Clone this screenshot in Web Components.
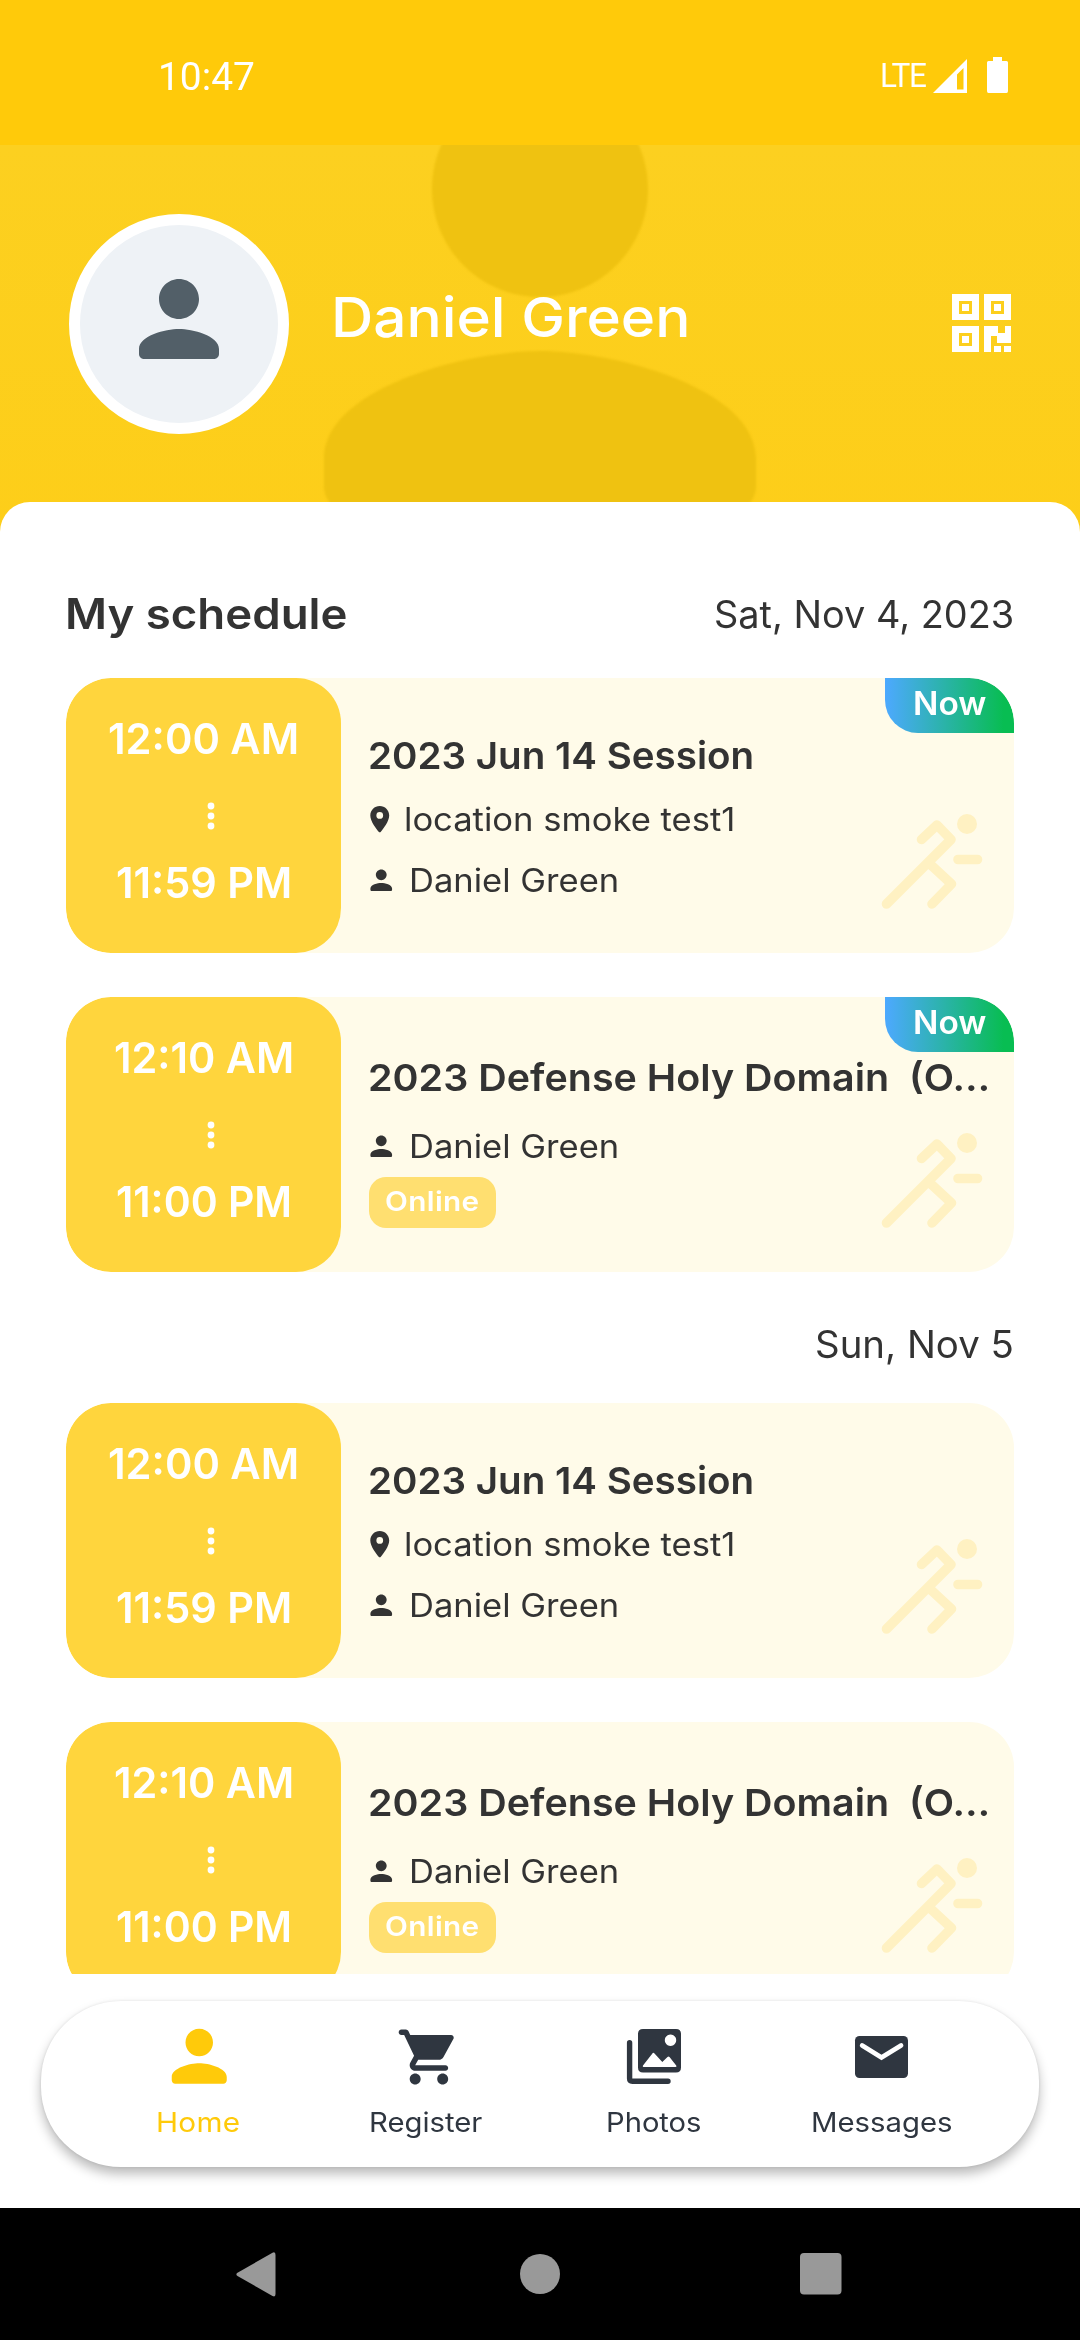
<!DOCTYPE html>
<html lang="en">
<head>
<meta charset="utf-8">
<title>My schedule</title>
<style>
html,body{margin:0;padding:0;background:#fff}
body{width:1080px;height:2340px;overflow:hidden;font-family:Inter,"Open Sans",sans-serif;color:#333}
</style>
</head>
<body>
<schedule-app></schedule-app>
<script>
const define = (name, html, setup) => {
  const t = document.createElement('template');
  t.innerHTML = html;
  customElements.define(name, class extends HTMLElement {
    connectedCallback() {
      if (this.shadowRoot) return;
      this.attachShadow({mode: 'open'}).append(t.content.cloneNode(true));
      if (setup) setup(this, this.shadowRoot);
    }
  });
};

// A single line whose glyphs are widened (and lightly tracked) so that its ink spans exactly `w` pixels.
const ctx = document.createElement('canvas').getContext('2d');
define('fit-text', `<style>
:host{display:block;flex:none;white-space:pre;line-height:var(--lh,50px);height:var(--lh,50px)}
span{display:inline-block;white-space:pre;transform-origin:0 50%}
</style><span><slot></slot></span>`, (host, root) => {
  const g = n => host.getAttribute(n);
  const size = +g('size'), weight = g('weight') || 400, w = +g('w');
  const family = g('family') || 'Inter';
  const text = host.textContent;
  ctx.font = `${weight} ${size}px ${family}`;
  const m = ctx.measureText(text);
  const ink = m.actualBoundingBoxRight + m.actualBoundingBoxLeft;
  const sx = Math.max(.94, Math.min(1.1, w / ink));
  const ls = (w / sx - ink) / (text.length - 1);
  host.style.cssText += `;width:${w}px;font:${weight} ${size}px/var(--lh,50px) ${family},sans-serif;letter-spacing:${ls.toFixed(3)}px`;
  const span = root.querySelector('span');
  span.style.transform = `scaleX(${sx.toFixed(4)})`;
  span.style.marginLeft = (m.actualBoundingBoxLeft * sx).toFixed(2) + 'px';
});

const ICONS = {
  person: '<svg viewBox="0 0 24 24"><path d="M12 12c2.21 0 4-1.79 4-4s-1.79-4-4-4-4 1.79-4 4 1.79 4 4 4zm0 2c-2.67 0-8 1.34-8 4v1c0 .55.45 1 1 1h14c.55 0 1-.45 1-1v-1c0-2.66-5.33-4-8-4z"/></svg>',
  pin: '<svg viewBox="5 2 14 20"><path fill-rule="evenodd" d="M12 2C8.1 2 5 5.1 5 9c0 4.2 4.4 9.9 6.2 12.1.4.5 1.2.5 1.6 0C14.600 18.900 19 13.200 19 9c0-3.900-3.100-7-7-7zm0 9.500a2.500 2.500 0 1 1 0-5 2.500 2.500 0 0 1 0 5z"/></svg>',
  cart: '<svg viewBox="-.7 0 24 24"><path d="M7 18c-1.1 0-1.990.9-1.990 2S5.900 22 7 22s2-.9 2-2-.9-2-2-2zM1 3c0 .55.45 1 1 1h1l3.600 7.590-1.350 2.440C4.520 15.370 5.480 17 7 17h11c.55 0 1-.45 1-1s-.45-1-1-1H7l1.100-2h7.450c.75 0 1.410-.41 1.750-1.030l3.580-6.490A.996.996 0 0 0 20.010 4H5.210l-.67-1.430A.993.993 0 0 0 3.640 2H2c-.55 0-1 .45-1 1zm16 15c-1.100 0-1.990.9-1.990 2s.89 2 1.990 2 2-.9 2-2-.9-2-2-2z"/></svg>',
  photos: '<svg viewBox="0 0 54 55"><path fill-rule="evenodd" d="M16 0H49Q54 0 54 5V38.500Q54 43.500 49 43.500H16Q11 43.500 11 38.500V5Q11 0 16 0zM43.500 5.500a5.700 5.700 0 1 0 .01 0zM16.500 38H48.500Q50 38 49.200 36.500L42.500 28Q41.500 26.800 40.500 28L35.300 33 27.500 24.500Q26.300 23 25.200 24.700L16 36.500Q15.400 38 16.500 38z"/><path d="M2.600 13.800V49.500Q2.600 52.200 5.300 52.200H41" fill="none" stroke="currentColor" stroke-width="5.400" stroke-linecap="round"/></svg>',
  mail: '<svg viewBox="0 0 53 42"><rect width="53" height="42" rx="4.500"/><path d="M7.200 9.500L26.500 21.500 46 9.500" fill="none" stroke="#fff" stroke-width="4.800" stroke-linecap="round"/></svg>',
  qr: '<svg viewBox="0 0 59 58"><path fill-rule="evenodd" d="M0 0h27v26H0zM7 7v13h13V7zM10 10h7v7h-7zM32 0h27v26H32zM39 7v13h13V7zM42 10h7v7h-7zM0 32h27v26H0zM7 39v13h13V39zM10 42h7v7h-7zM32 32h14v7h7v-7h6v17H45v-7h-6v16h-7zM42 52h7v6h-7zM52 52h7v6h-7z"/></svg>',
  runner: '<svg viewBox="0 0 102 95"><g fill="none" stroke="currentColor" stroke-width="9.600" stroke-linecap="round" stroke-linejoin="round"><path d="M40.500 25.500L56 11 70 25.500 5.500 90M50 51L70.500 70 51 90M77 45.500H96.500"/></g><circle cx="86" cy="10" r="10"/></svg>',
  dots: '<svg viewBox="0 0 8 28"><circle cx="4" cy="4" r="3.400"/><circle cx="4" cy="14" r="3.400"/><circle cx="4" cy="24" r="3.400"/></svg>',
  signal: '<svg viewBox="0 0 34 34"><path fill-rule="evenodd" d="M34 0V34H0zM30.500 9L24 15.500V30.500H30.500z"/></svg>',
  battery: '<svg viewBox="0 0 21 36"><path d="M6 0h9v4h4.500Q21 4 21 5.500v28.500Q21 36 19.500 36h-18Q0 36 0 34V5.500Q0 4 1.500 4H6z"/></svg>',
  back: '<svg viewBox="0 0 40 45"><path d="M36.500 .8Q39.500-.8 39.500 3V42Q39.500 45.600 36.500 44L1.500 24Q-.8 22.400 1.500 20.800z"/></svg>',
  home: '<svg viewBox="0 0 40 40"><circle cx="20" cy="20" r="20"/></svg>',
  recent: '<svg viewBox="0 0 41.500 41.500"><rect width="41.500" height="41.500" rx="4"/></svg>'
};
define('app-icon', `<style>:host{display:block;flex:none}svg{display:block;width:100%;height:100%;fill:currentColor;overflow:visible}</style>`,
  (host, root) => {
    root.innerHTML += ICONS[host.getAttribute('name')];
    const [w, h] = host.getAttribute('box').split(' ');
    host.style.width = w + 'px'; host.style.height = h + 'px';
  });

define('status-bar', `<style>
:host{display:flex;box-sizing:border-box;height:145px;flex:none;background:#ffca0a;color:#fff;padding:52px 72px 0 161px;align-items:flex-start}
.sp{flex:1}
.lte{margin-top:-1px;margin-right:7px}
.sig{margin:7px 20px 0 0}.bat{margin-top:5px}
</style>
<fit-text size="39" w="93" family="Roboto">10:47</fit-text><div class="sp"></div>
<fit-text class="lte" size="33.500" w="44" family="Roboto">LTE</fit-text>
<app-icon class="sig" name="signal" box="34 34"></app-icon><app-icon class="bat" name="battery" box="21 36"></app-icon>`);

define('profile-header', `<style>
:host{display:flex;position:relative;box-sizing:border-box;height:387px;flex:none;overflow:hidden;background:linear-gradient(#fcd020,#fdce19);padding:69px 69px 0;color:#fff}
.ghost{position:absolute;left:216px;top:-172px;color:#efc211;filter:blur(.8px)}
.avatar{position:relative;box-sizing:border-box;width:220px;height:220px;border:11px solid #fff;border-radius:50%;background:#eef2f6;color:#525f68;padding:34px 39px}
.name{position:relative;margin:78px 0 0 46px}
.sp{flex:1}.qr{margin-top:80px}
</style>
<app-icon class="ghost" name="person" box="648 648"></app-icon>
<div class="avatar"><app-icon name="person" box="120 120"></app-icon></div>
<fit-text class="name" size="54.500" w="351" weight="500">Daniel Green</fit-text><div class="sp"></div>
<app-icon class="qr" name="qr" box="59 58"></app-icon>`);

define('session-card', `<style>
:host{display:flex;position:relative;height:275px;flex:none;background:#fffbe9;border-radius:45px;overflow:hidden}
.time{box-sizing:border-box;width:275px;height:275px;border-radius:45px;background:#ffd53d;color:#fff;display:flex;flex-direction:column;align-items:center;padding:36px 1px 0 0}
.dots{margin:38px 0 28px 15px}
.info{padding:53px 0 0 29px;display:flex;flex-direction:column;align-items:flex-start}
:host([online]) .info{padding-top:56px}
.row{display:flex;align-items:center;height:40px;--lh:40px}
.place{margin-top:18.500px;gap:17px}
.host{margin-top:21px;gap:18px}
.host app-icon{margin:-1px -4px 0 -5px}
:host([online]) .host{margin-top:24px}
.pill{display:flex;margin:10px 0 0 -1px;padding:0 17.500px;background:#ffdf70;color:#fff;border-radius:17px;height:51px;--lh:49px}
.now{position:absolute;right:0;top:0;box-sizing:border-box;width:129px;height:55px;border-radius:0 45px 0 33px;background:linear-gradient(90deg,#4da9ff,#08bd52 92%);color:#fff;padding-left:30px;--lh:52px}
.run{position:absolute;right:31px;top:136px;color:#fff1c2}
</style>
<div class="time"></div>
<div class="info"></div><app-icon class="run" name="runner" box="102 95"></app-icon>`, (host, root) => {
  const on = host.hasAttribute('online');
  const t = (text, w) => `<fit-text size="42.500" weight="600" w="${w}">${text}</fit-text>`;
  const dots = '<app-icon class="dots" name="dots" box="8 28"></app-icon>';
  root.querySelector('.time').innerHTML = on
    ? t('12:10 AM', 177) + dots + t('11:00 PM', 173)
    : t('12:00 AM', 188) + dots + t('11:59 PM', 173);
  const person = '<div class="row host"><app-icon name="person" box="32.500 32.500"></app-icon><fit-text size="32" w="206">Daniel Green</fit-text></div>';
  root.querySelector('.info').innerHTML = on
    ? '<fit-text size="37.500" weight="600" w="617">2023 Defense Holy Domain  (O…</fit-text>' + person + '<div class="pill"><fit-text size="27" weight="600" w="92">Online</fit-text></div>'
    : '<fit-text size="37.500" weight="600" w="382">2023 Jun 14 Session</fit-text><div class="row place"><app-icon name="pin" box="19.500 27"></app-icon><fit-text size="32" w="327">location smoke test1</fit-text></div>' + person;
  if (host.hasAttribute('now')) {
    const now = document.createElement('div');
    now.className = 'now';
    now.innerHTML = '<fit-text size="32.500" weight="600" w="71">Now</fit-text>';
    root.append(now);
  }
});

define('schedule-list', `<style>
:host{display:flex;flex-direction:column;box-sizing:border-box;height:1472px;flex:none;overflow:hidden;background:#fff;padding:0 66px;border-radius:30px 30px 0 0}
.head{display:flex;justify-content:space-between;padding:87px 2px 0;height:89px;flex:none}
.head fit-text:last-child{margin-top:1px}
.day{display:flex;justify-content:flex-end;padding:48px 1.500px 0;height:83px;flex:none}
.gap{height:44px;flex:none}
</style>
<div class="head"><fit-text size="42.500" weight="600" w="278">My schedule</fit-text><fit-text size="37.500" w="296">Sat, Nov 4, 2023</fit-text></div>
<session-card now></session-card><div class="gap"></div><session-card online now></session-card>
<div class="day"><fit-text size="37.500" w="195">Sun, Nov 5</fit-text></div>
<session-card></session-card><div class="gap"></div><session-card online></session-card>`);

define('tab-item', `<style>
:host{display:flex;flex-direction:column;align-items:center;flex:none;width:227.700px;color:#2f3640}
:host([active]){color:#ffca0a}
.i{height:83px;display:flex;align-items:center;margin-bottom:5px}
</style><div class="i"><slot name="icon"></slot></div><slot></slot>`);

define('tab-bar', `<style>
:host{display:flex;box-sizing:border-box;flex:none;margin:27px 41px 41px;height:166px;border-radius:80px;background:#fff;box-shadow:0 7px 12px rgba(0,0,0,.27),0 0 3px rgba(0,0,0,.09);padding:14px 0 0 44px}
fit-text{--lh:40px}
</style>
<tab-item active><app-icon slot="icon" name="person" box="82.500 82.500"></app-icon><fit-text size="27" w="81">Home</fit-text></tab-item>
<tab-item><app-icon slot="icon" name="cart" box="66 66"></app-icon><fit-text size="27" w="111">Register</fit-text></tab-item>
<tab-item><app-icon slot="icon" name="photos" box="54 55"></app-icon><fit-text size="27" w="92">Photos</fit-text></tab-item>
<tab-item><app-icon slot="icon" name="mail" box="53 42"></app-icon><fit-text size="27" w="138">Messages</fit-text></tab-item>`);

define('system-nav', `<style>
:host{display:flex;height:132px;flex:none;box-sizing:border-box;background:#000;color:#999;align-items:center;justify-content:space-between;padding:0 238.500px 0 236px}
app-icon[name=home]{margin-left:4px}
</style><app-icon name="back" box="40 45"></app-icon><app-icon name="home" box="40 40"></app-icon><app-icon name="recent" box="41.500 41.500"></app-icon>`);

define('schedule-app', `<style>
:host{display:flex;flex-direction:column;width:1080px;height:2340px;overflow:hidden}
schedule-list{position:relative;margin-top:-30px}
</style><status-bar></status-bar><profile-header></profile-header><schedule-list></schedule-list><tab-bar></tab-bar><system-nav></system-nav>`);
</script>
</body>
</html>
